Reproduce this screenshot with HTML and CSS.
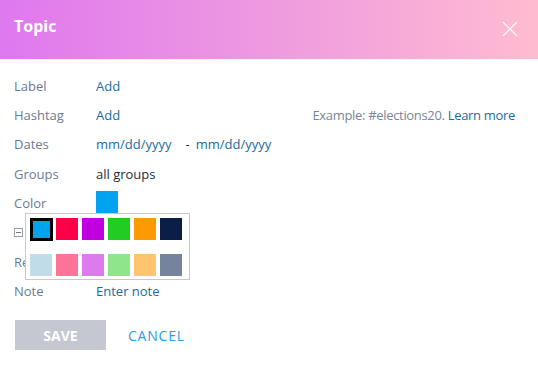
FILE: index.html
```html
<!DOCTYPE html>
<html lang="en">
<head>
<meta charset="UTF-8">
<meta name="viewport" content="width=device-width, initial-scale=1.0">
<title>Topic</title>
<link rel="stylesheet" href="styles.css">
</head>
<body>

<div class="dialog">
  <div class="header">
    <h1>Topic</h1>
    <svg class="close" width="16" height="16" viewBox="0 0 16 16">
      <path d="M1 1 L15 15 M15 1 L1 15" stroke="#fff" stroke-width="1.2" fill="none"/>
    </svg>
  </div>

  <div class="content">
    <div class="row">
      <span class="label">Label</span>
      <span class="link">Add</span>
    </div>
    <div class="row">
      <span class="label">Hashtag</span>
      <span class="link">Add</span>
      <span class="hint">Example: #elections20. <span class="link">Learn more</span></span>
    </div>
    <div class="row">
      <span class="label">Dates</span>
      <span class="link">mm/dd/yyyy</span>
      <span class="dash">-</span>
      <span class="link">mm/dd/yyyy</span>
    </div>
    <div class="row">
      <span class="label">Groups</span>
      <span class="value">all groups</span>
    </div>
    <div class="row color-row">
      <span class="label">Color</span>
      <span class="swatch-current"></span>

      <!-- color picker popup -->
      <div class="picker">
        <span class="swatch selected" style="background:#00a3ef"></span>
        <span class="swatch" style="background:#ff0048"></span>
        <span class="swatch" style="background:#c000e0"></span>
        <span class="swatch" style="background:#22cc22"></span>
        <span class="swatch" style="background:#ff9900"></span>
        <span class="swatch" style="background:#0b1e45"></span>
        <span class="swatch" style="background:#bfdce8"></span>
        <span class="swatch" style="background:#ff7399"></span>
        <span class="swatch" style="background:#dd7aee"></span>
        <span class="swatch" style="background:#8ee58a"></span>
        <span class="swatch" style="background:#ffc46e"></span>
        <span class="swatch" style="background:#76839c"></span>
      </div>
    </div>
    <div class="row">
      <span class="checkbox"></span>
      <span class="label">Pin topic</span>
    </div>
    <div class="row">
      <span class="label">Repeat</span>
      <span class="link">Never</span>
    </div>
    <div class="row">
      <span class="label">Note</span>
      <span class="link">Enter note</span>
    </div>

    <div class="actions">
      <button class="save">SAVE</button>
      <button class="cancel">CANCEL</button>
    </div>
  </div>
</div>

</body>
</html>
```

FILE: styles.css
```css
* {
  box-sizing: border-box;
}

body {
  margin: 0;
  font-family: "Open Sans", "Noto Sans", sans-serif;
  font-size: 13px;
  background: #fff;
}

.header {
  height: 59px;
  padding: 0 20px 0 14px;
  display: flex;
  align-items: center;
  justify-content: space-between;
  background: linear-gradient(to right, #de78ef, #ffbcd0);
}

.header h1 {
  margin: 0;
  color: white;
  font-size: 16px;
  font-weight: bold;
  padding-bottom: 8px;
}

.close {
  margin-top: -2px;
}

.content {
  padding: 12px 14px 0 14px;
}

.row {
  position: relative;
  height: 29.4px;
  display: flex;
  align-items: center;
}

.label {
  width: 82px;
  color: #6c7a92;
}

.link {
  color: #1b6c9e;
}

.value {
  color: #1f2a3c;
}

.dash {
  color: #1f2a3c;
  margin: 0 6px 0 14px;
}

.hint {
  margin-left: auto;
  margin-right: 9px;
  color: #7a8598;
  letter-spacing: -0.32px;
}

.swatch-current {
  width: 22px;
  height: 22px;
  background: #00a3ef;
  margin-top: -3px;
}

.checkbox {
  width: 9px;
  height: 9px;
  border: 1px solid #9aa0aa;
  position: relative;
  margin-right: 6px;
}

.checkbox::after {
  content: "";
  position: absolute;
  left: 1px;
  top: 3px;
  width: 5px;
  height: 1px;
  background: #6c7a92;
}

.picker {
  position: absolute;
  left: 11px;
  top: 24px;
  width: 165px;
  height: 67px;
  padding: 4px;
  background: white;
  border: 1px solid #c8c8c8;
  display: grid;
  grid-template-columns: repeat(6, 22px);
  column-gap: 4px;
  row-gap: 13px;
  z-index: 2;
}

.swatch {
  width: 22px;
  height: 22px;
}

.swatch.selected {
  width: 23px;
  height: 23px;
  border: 3px solid black;
}

.actions {
  margin-top: 14px;
  display: flex;
  align-items: center;
}

button {
  font-family: inherit;
  font-size: 14px;
  border: none;
  cursor: pointer;
}

.save {
  width: 91px;
  height: 30px;
  margin-left: 1px;
  background: #c5c8d0;
  color: white;
  font-weight: bold;
}

.cancel {
  margin-left: 16px;
  background: none;
  color: #1ca0ef;
  letter-spacing: 0.8px;
}
```
